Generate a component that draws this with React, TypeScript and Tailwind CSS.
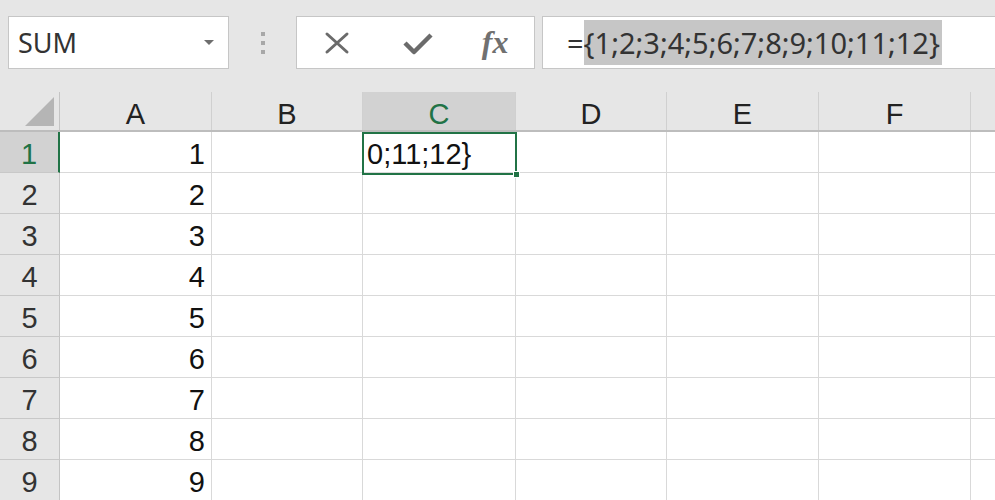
import React from 'react'

const cols = [
  { name: 'A', w: 'w-[152px]' },
  { name: 'B', w: 'w-[151px]' },
  { name: 'C', w: 'w-[153px]' },
  { name: 'D', w: 'w-[151px]' },
  { name: 'E', w: 'w-[152px]' },
  { name: 'F', w: 'w-[152px]' },
  { name: '', w: 'w-[60px]' },
]

const rows = [1, 2, 3, 4, 5, 6, 7, 8, 9]

function CancelIcon() {
  return (
    <svg width="28" height="24" viewBox="0 0 28 24">
      <path d="M4 3 L24 21 M24 3 L4 21" stroke="#6b6b6b" strokeWidth="3" strokeLinecap="round" fill="none" />
    </svg>
  )
}

function CheckIcon() {
  return (
    <svg width="30" height="24" viewBox="0 0 30 24">
      <path d="M2 12 L11 21 L28 4" stroke="#6b6b6b" strokeWidth="4.5" strokeLinejoin="round" fill="none" />
    </svg>
  )
}

export default function App() {
  return (
    <div className="w-[995px] h-[500px] overflow-hidden bg-[#e6e6e6] font-['Liberation_Sans',Arial,sans-serif]">
      {/* formula bar */}
      <div className="h-[92px] flex items-start pt-[16px]">
        <div className="ml-[8px] w-[221px] h-[53px] bg-white border border-[#c6c6c6] flex items-center justify-between pl-[9px] pr-[14px]">
          <span className="text-[27px] text-[#333] font-['Noto_Sans',sans-serif] leading-none">SUM</span>
          <span className="w-0 h-0 border-l-[5px] border-r-[5px] border-t-[5px] border-l-transparent border-r-transparent border-t-[#6e6e6e]"></span>
        </div>
        <div className="w-[67px] h-[53px] flex flex-col items-center justify-center gap-[5px]">
          <span className="w-[4px] h-[4px] bg-[#a8a8a8]"></span>
          <span className="w-[4px] h-[4px] bg-[#a8a8a8]"></span>
          <span className="w-[4px] h-[4px] bg-[#a8a8a8]"></span>
        </div>
        <div className="w-[239px] h-[53px] bg-white border border-[#c6c6c6] flex items-center">
          <div className="w-[80px] flex justify-center"><CancelIcon /></div>
          <div className="w-[80px] flex justify-center pl-[4px]"><CheckIcon /></div>
          <div className="w-[78px] flex justify-center">
            <span className="font-['Liberation_Serif',serif] italic font-bold text-[32px] text-[#707070] leading-none -mt-[2px]">fx</span>
          </div>
        </div>
        <div className="ml-[7px] flex-1 h-[53px] bg-white border border-[#c6c6c6] border-r-0 flex items-center pl-[24px]">
          <span className="text-[29px] text-[#333] font-['Noto_Sans',sans-serif] leading-none">=</span>
          <span className="text-[29px] text-[#333] font-['Noto_Sans',sans-serif] leading-[45px] h-[45px] bg-[#c6c6c6] pr-[2px]">
            {'{1;2;3;4;5;6;7;8;9;10;11;12}'}
          </span>
        </div>
      </div>

      {/* sheet */}
      <div className="relative">
        {/* column headers */}
        <div className="flex h-[40px] border-b-2 border-[#bdbdbd]">
          <div className="w-[60px] shrink-0 border-r border-[#c4c4c4] flex items-end justify-end pr-[5px] pb-[4px]">
            <svg width="29" height="29" viewBox="0 0 29 29">
              <polygon points="29,0 29,29 0,29" fill="#b5b5b5" />
            </svg>
          </div>
          {cols.map((c) => (
            <div
              key={c.name}
              className={`${c.w} shrink-0 border-r border-[#d0d0d0] flex items-center justify-center pt-[6px] text-[29px] leading-none ${c.name === 'C' ? 'bg-[#d2d2d2] text-[#217346]' : 'text-[#222]'}`}
            >
              {c.name}
            </div>
          ))}
        </div>

        {/* rows */}
        {rows.map((r) => (
          <div key={r} className="flex h-[41px]">
            <div
              className={`w-[60px] shrink-0 flex items-center justify-center pt-[5px] text-[29px] leading-none border-b border-[#c8c8c8] ${r === 1 ? 'bg-[#d2d2d2] text-[#217346] border-r-2 border-r-[#217346]' : 'bg-[#e6e6e6] text-[#333] border-r border-r-[#c4c4c4]'}`}
            >
              {r}
            </div>
            {cols.map((c) => (
              <div
                key={c.name}
                className={`${c.w} shrink-0 bg-white border-r border-b border-[#d9d9d9] flex items-center pt-[5px] text-[29px] leading-none text-[#111] ${c.name === 'A' ? 'justify-end pr-[6px]' : 'pl-[4px]'}`}
              >
                {c.name === 'A' ? r : ''}
                {c.name === 'C' && r === 1 ? <span className="whitespace-nowrap">0;11;12{'}'}</span> : null}
              </div>
            ))}
          </div>
        ))}

        {/* active cell C1 */}
        <div className="absolute left-[362px] top-[40px] w-[155px] h-[43px] border-2 border-[#217346] pointer-events-none">
          <span className="absolute -right-[5px] -bottom-[5px] w-[7px] h-[7px] bg-[#217346] border border-white"></span>
        </div>
      </div>
    </div>
  )
}
